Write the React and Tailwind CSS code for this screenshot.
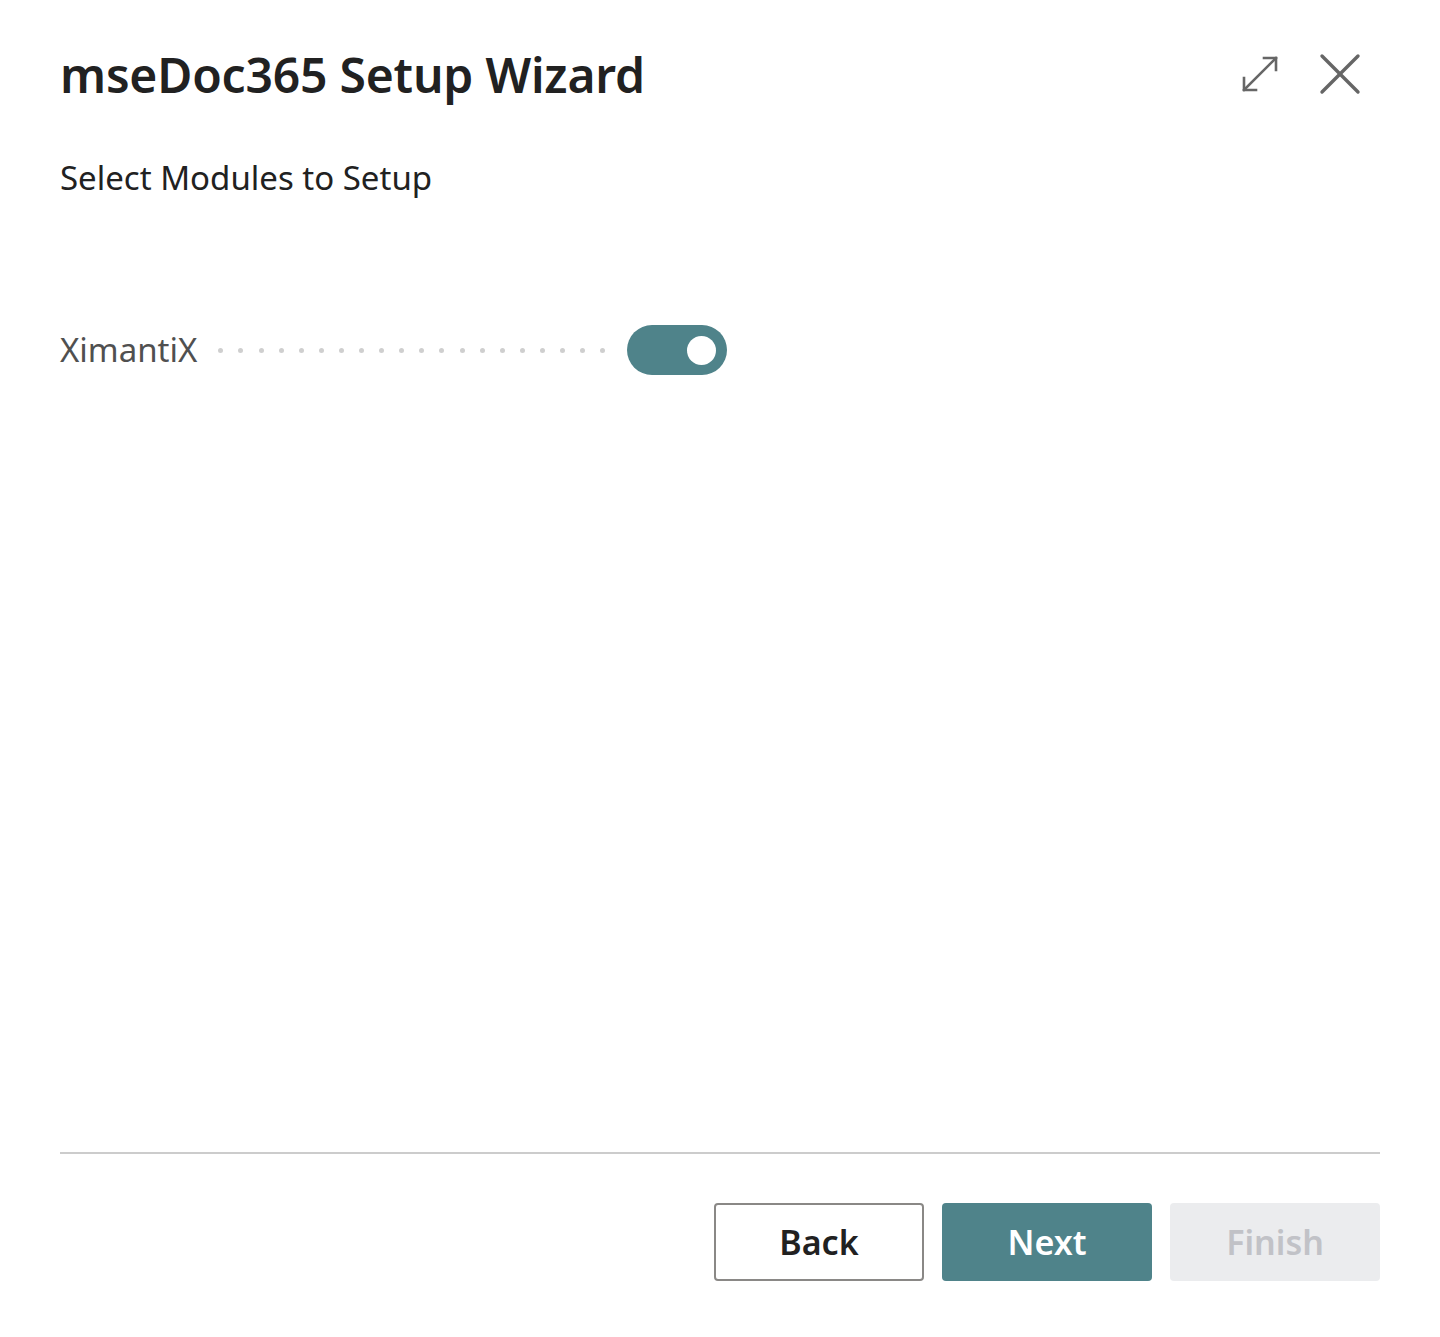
import React from "react";

export default function App() {
  const dots = Array.from({ length: 20 });
  return (
    <div className="w-[1440px] h-[1337px] bg-white flex flex-col px-[60px] text-[#212121]" style={{ fontFamily: '"Noto Sans", "Open Sans", sans-serif' }}>
      <div className="flex items-start justify-between pt-[43px]">
        <h1 className="text-[48px] leading-[64px] font-semibold text-[#212121] tracking-[-0.2px]">mseDoc365 Setup Wizard</h1>
        <div className="flex items-center gap-[40px] pt-[10px] pr-[19px]">
          <svg width="38" height="38" viewBox="0 0 38 38" fill="none" stroke="#666" strokeWidth="2.6" strokeLinecap="square">
            <path d="M3 35 L35 3" />
            <path d="M23 3 H35 V15" />
            <path d="M3 23 V35 H15" />
          </svg>
          <svg width="42" height="42" viewBox="0 0 42 42" fill="none" stroke="#666" strokeWidth="3.4" strokeLinecap="round">
            <path d="M3 3 L39 39" />
            <path d="M39 3 L3 39" />
          </svg>
        </div>
      </div>
      <div className="mt-[49px] text-[33px] leading-[44px] text-[#212121]">Select Modules to Setup</div>
      <div className="mt-[125px] flex items-center">
        <span className="text-[33px] leading-[44px] text-[#505050]">XimantiX</span>
        <div className="flex items-center gap-[15.1px] ml-[21px] mr-[22px]">
          {dots.map((_, i) => (
            <span key={i} className="w-[5px] h-[5px] rounded-full bg-[#cfcfcf]" />
          ))}
        </div>
        <div className="w-[100px] h-[50px] rounded-full bg-[#4f838a] flex items-center justify-end pr-[11px]">
          <span className="w-[29px] h-[29px] rounded-full bg-white" />
        </div>
      </div>
      <div className="flex-1" />
      <div className="h-[2px] bg-[#cccccc]" />
      <div className="flex justify-end gap-[18px] pt-[49px] pb-[56px]">
        <button className="w-[210px] h-[78px] rounded-[4px] border-2 border-[#8a8886] bg-white text-[34px] font-semibold text-[#212121]">Back</button>
        <button className="w-[210px] h-[78px] rounded-[4px] bg-[#4f838a] text-[34px] font-semibold text-white">Next</button>
        <button className="w-[210px] h-[78px] rounded-[4px] bg-[#ebecee] text-[34px] font-semibold text-[#c1c2c7]">Finish</button>
      </div>
    </div>
  );
}
